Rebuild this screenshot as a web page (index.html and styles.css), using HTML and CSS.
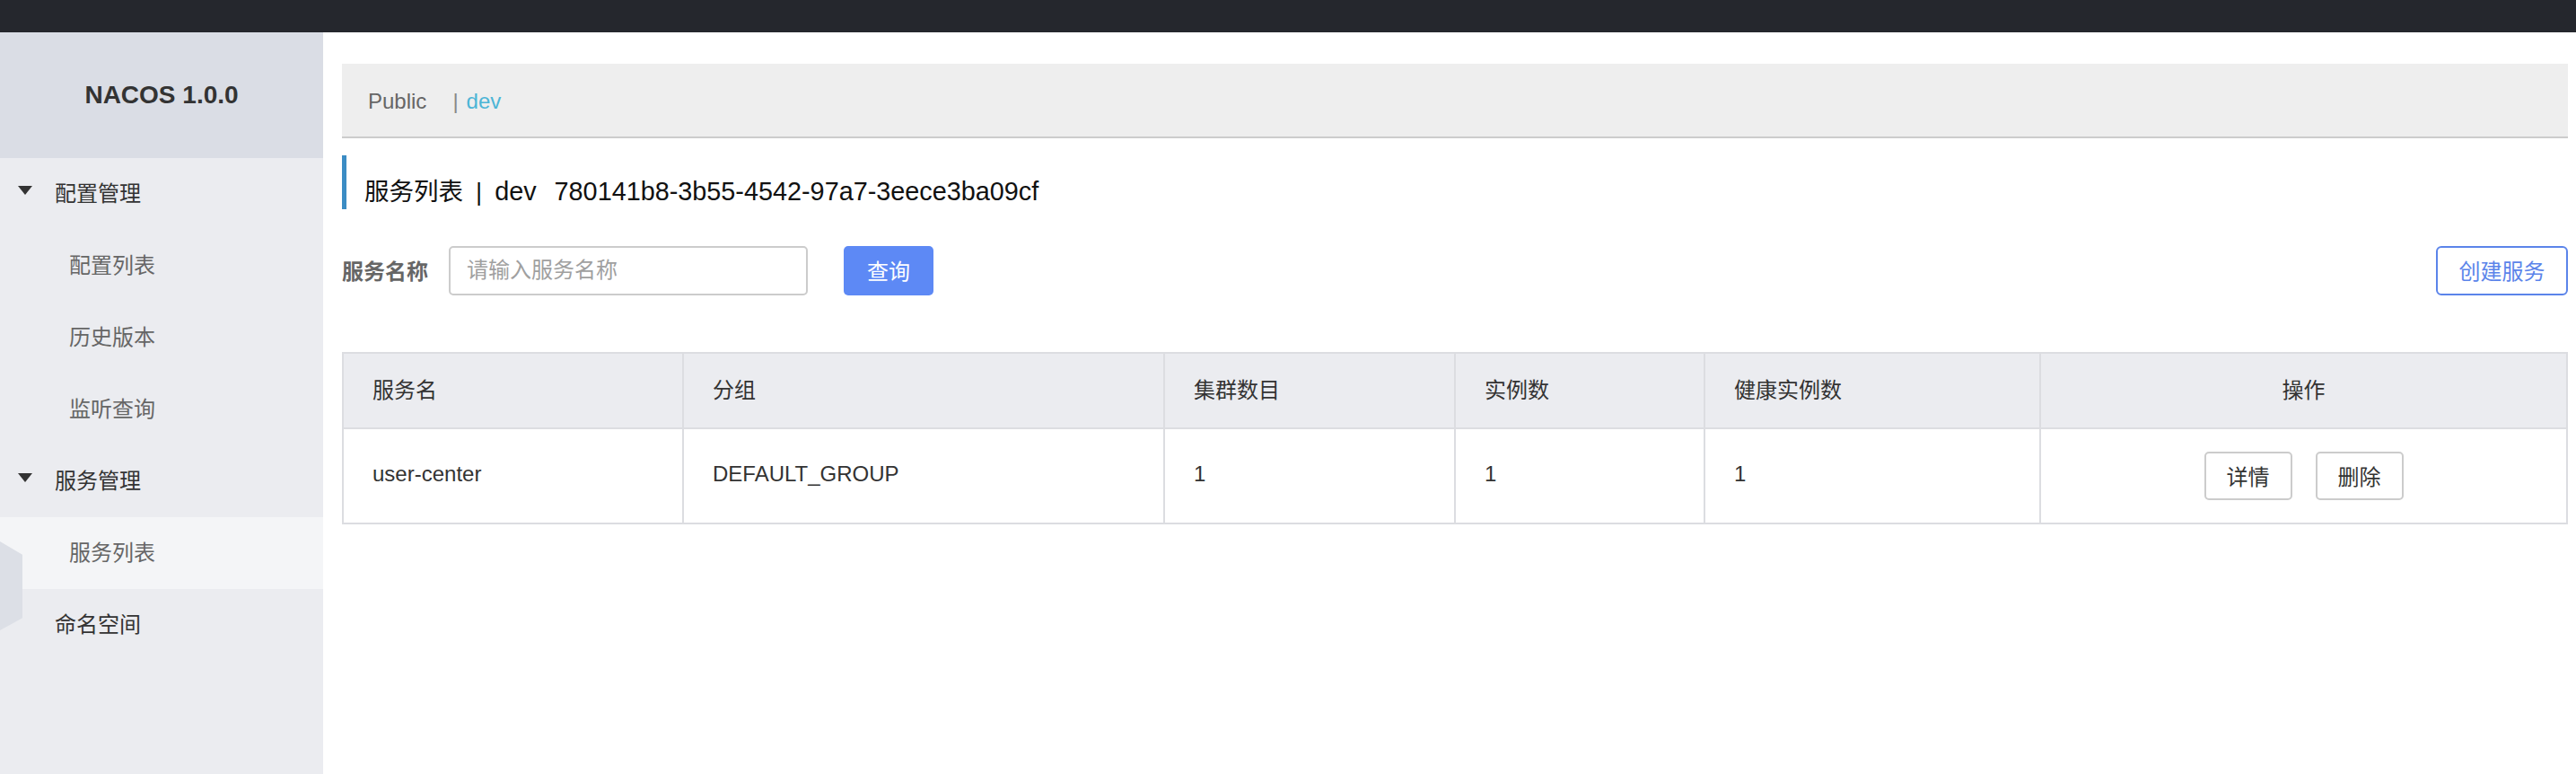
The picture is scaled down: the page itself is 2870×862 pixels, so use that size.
FILE: index.html
```html
<!DOCTYPE html>
<html lang="zh-CN">
<head>
<meta charset="utf-8">
<title>Nacos</title>
<link rel="stylesheet" href="styles.css">
</head>
<body>
<div class="topbar"></div>
<div class="layout">
  <aside class="sidebar">
    <div class="brand">NACOS 1.0.0</div>
    <nav class="nav">
      <div class="nav-group"><span class="caret"></span>配置管理</div>
      <div class="nav-item">配置列表</div>
      <div class="nav-item">历史版本</div>
      <div class="nav-item">监听查询</div>
      <div class="nav-group"><span class="caret"></span>服务管理</div>
      <div class="nav-item active">服务列表</div>
      <div class="nav-top">命名空间</div>
    </nav>
    <div class="deco"></div>
  </aside>
  <main class="main">
    <div class="ns-bar">
      <span class="ns-public">Public</span>
      <span class="ns-sep">|</span>
      <span class="ns-dev">dev</span>
    </div>
    <div class="page-title">
      <span>服务列表</span><span class="title-sep">|</span><span class="title-latin">dev</span><span class="title-latin title-id">780141b8-3b55-4542-97a7-3eece3ba09cf</span>
    </div>
    <div class="search-row">
      <label class="search-label">服务名称</label>
      <input class="search-input" type="text" placeholder="请输入服务名称">
      <button class="btn-primary">查询</button>
      <div class="spacer"></div>
      <button class="btn-outline">创建服务</button>
    </div>
    <table class="table">
      <colgroup>
        <col class="c1"><col class="c2"><col class="c3"><col class="c4"><col class="c5"><col class="c6">
      </colgroup>
      <thead>
        <tr>
          <th>服务名</th>
          <th>分组</th>
          <th>集群数目</th>
          <th>实例数</th>
          <th>健康实例数</th>
          <th class="center">操作</th>
        </tr>
      </thead>
      <tbody>
        <tr>
          <td>user-center</td>
          <td>DEFAULT_GROUP</td>
          <td>1</td>
          <td>1</td>
          <td>1</td>
          <td class="center ops"><button class="btn-small">详情</button><button class="btn-small">删除</button></td>
        </tr>
      </tbody>
    </table>
  </main>
</div>
</body>
</html>
```

FILE: styles.css
```css
* { box-sizing: border-box; }

html, body {
  margin: 0;
  padding: 0;
  background: #ffffff;
  font-family: "Liberation Sans", "Noto Sans CJK SC", sans-serif;
  color: #333333;
}

.topbar {
  height: 36px;
  background: #25272d;
}

.layout {
  display: flex;
  min-height: 826px;
}

.sidebar {
  position: relative;
  width: 360px;
  flex: 0 0 360px;
  background: #ebecf0;
}

.brand {
  height: 140px;
  background: #dadde5;
  display: flex;
  align-items: center;
  justify-content: center;
  font-size: 28px;
  font-weight: bold;
  color: #333333;
}

.nav-group,
.nav-item,
.nav-top {
  height: 80px;
  display: flex;
  align-items: center;
  font-size: 24px;
  padding-bottom: 6px;
}

.nav-group {
  padding-left: 20px;
  color: #333333;
}

.nav-top {
  padding-left: 61px;
  color: #333333;
}

.caret {
  width: 0;
  height: 0;
  border-left: 8px solid transparent;
  border-right: 8px solid transparent;
  border-top: 10px solid #333333;
  margin-right: 25px;
  margin-top: -2px;
}

.nav-item {
  padding-left: 77px;
  color: #666666;
}

.nav-item.active {
  background: #f4f5f7;
}

.deco {
  position: absolute;
  left: 0;
  top: 567px;
  width: 25px;
  height: 99px;
  background: #dcdfe6;
  clip-path: polygon(0 0, 100% 15%, 100% 86%, 0 100%);
}

.main {
  flex: 1;
  padding: 35px 11px 0 21px;
  display: flex;
  flex-direction: column;
}

.ns-bar {
  height: 83px;
  background: #eeeeee;
  border-bottom: 2px solid #cccccc;
  display: flex;
  align-items: center;
  padding-left: 29px;
  padding-top: 3px;
  font-size: 24px;
}

.ns-public { color: #666666; }

.ns-sep {
  color: #888888;
  margin-left: 29px;
  margin-right: 9px;
  font-size: 24px;
}

.ns-dev { color: #4cb5d6; }

.page-title {
  margin-top: 19px;
  height: 60px;
  border-left: 5px solid #3b8cc4;
  padding-left: 20px;
  padding-top: 20px;
  line-height: 40px;
  font-size: 27.5px;
  color: #111111;
  display: flex;
  align-items: baseline;
}

.title-latin {
  font-size: 28.8px;
}

.title-sep {
  margin: 0 14px 0 14px;
  font-weight: normal;
}

.title-id {
  margin-left: 20px;
}

.search-row {
  margin-top: 41px;
  height: 55px;
  display: flex;
  align-items: center;
}

.search-label {
  font-size: 24px;
  font-weight: bold;
  color: #666666;
  width: 119px;
  padding-bottom: 3px;
}

.search-input {
  width: 400px;
  height: 55px;
  border: 2px solid #cccccc;
  border-radius: 5px;
  padding: 0 18px 2px;
  font-size: 24px;
  font-family: "Liberation Sans", "Noto Sans CJK SC", sans-serif;
  color: #333333;
  outline: none;
}

.search-input::placeholder { color: #a0a0a0; }

.btn-primary {
  margin-left: 40px;
  width: 100px;
  height: 55px;
  border: none;
  border-radius: 5px;
  background: #5d89f5;
  color: #ffffff;
  font-size: 24px;
  font-family: "Liberation Sans", "Noto Sans CJK SC", sans-serif;
  padding-bottom: 3px;
}

.spacer { flex: 1; }

.btn-outline {
  width: 147px;
  height: 55px;
  border: 2px solid #5b84ea;
  border-radius: 6px;
  background: #ffffff;
  color: #5b84ea;
  font-size: 24px;
  font-family: "Liberation Sans", "Noto Sans CJK SC", sans-serif;
  padding-bottom: 3px;
}

.table {
  margin-top: 63px;
  width: 2478px;
  table-layout: fixed;
  border-collapse: collapse;
  border: 2px solid #dcdde1;
  font-size: 24px;
}

.c1 { width: 379px; }
.c2 { width: 536px; }
.c3 { width: 324px; }
.c4 { width: 278px; }
.c5 { width: 374px; }
.c6 { width: 587px; }

.table th,
.table td {
  border: 2px solid #dcdde1;
  text-align: left;
  padding: 0 0 5px 32px;
  font-weight: normal;
  color: #333333;
}

.table th {
  height: 84px;
  background: #ebecf0;
}

.table td {
  height: 106px;
  background: #ffffff;
}

.table .center {
  text-align: center;
  padding: 0 0 5px 0;
}

.table .ops {
  font-size: 0;
  padding: 0;
}

.btn-small {
  width: 98px;
  height: 54px;
  border: 2px solid #cccccc;
  border-radius: 5px;
  background: #ffffff;
  color: #333333;
  font-size: 24px;
  font-family: "Liberation Sans", "Noto Sans CJK SC", sans-serif;
  margin: 0 13px;
  padding-bottom: 3px;
  vertical-align: middle;
}
```
